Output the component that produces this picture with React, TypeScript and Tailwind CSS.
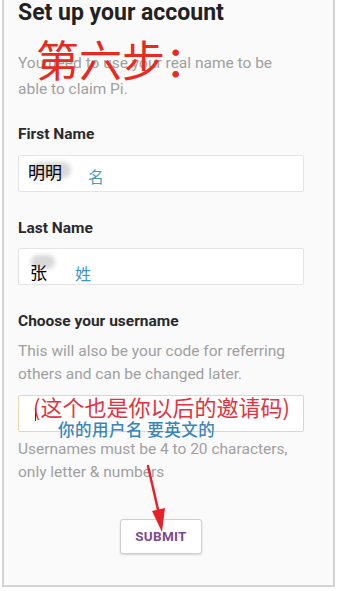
const cjk = "font-['Noto_Sans_CJK_SC',sans-serif]";

function Label({ children }: { children: string }) {
  return <label className="block text-[15.5px] leading-[20px] font-bold text-[#2a2a2a]">{children}</label>;
}

export default function App() {
  return (
    <div className="w-[337px] h-[591px] bg-white overflow-hidden font-['Roboto','Noto_Sans_CJK_SC',sans-serif]">
      <div className="relative ml-[2px] w-[333px] h-[587px] border-l-2 border-r-2 border-b-2 border-[#d4d4d4] bg-[#fafafa] pl-[14px] pr-[29px] flex flex-col">
        <h1 className="text-[23px] leading-[26px] font-bold text-[#222]">Set up your account</h1>
        <p className="mt-[24px] text-[15.5px] leading-[26px] text-[#a0a0a0]">
          You need to use your real name to be able to claim Pi.
        </p>
        {/* annotation */}
        <div className={`absolute left-[32px] top-[33px] text-[43px] leading-[50px] text-[#e82a20] ${cjk}`}>
          第六步：
        </div>

        <div className="mt-[22px]">
          <Label>First Name</Label>
        </div>
        <div className="mt-[11px] h-[37px] bg-white border border-[#e4e4e4] rounded-[2px] flex items-center pl-[9px]">
          <div className="relative">
            <div className="absolute left-[3px] top-[1px] w-[40px] h-[16px] rounded-full bg-[#d8d8d8] blur-[2px]" />
            <span className={`relative text-[17px] leading-[22px] text-black ${cjk}`}>明明</span>
          </div>
          <span className={`ml-[26px] mt-[4px] text-[16px] leading-[22px] text-[#4a9db5] ${cjk}`}>名</span>
        </div>

        <div className="mt-[26px]">
          <Label>Last Name</Label>
        </div>
        <div className="relative mt-[10px] h-[37px] bg-white border border-[#e4e4e4] rounded-[2px] flex items-end pb-[1px] pl-[11px]">
          <div className="absolute left-[12px] top-[6px] w-[24px] h-[14px] rounded-full bg-[#d8d8d8] blur-[2px]" />
          <span className={`relative text-[17px] leading-[22px] text-black ${cjk}`}>张</span>
          <span className={`ml-[28px] text-[16px] leading-[20px] text-[#3f92c0] ${cjk}`}>姓</span>
        </div>

        <div className="mt-[26px]">
          <Label>Choose your username</Label>
        </div>
        <p className="mt-[9px] text-[15.5px] leading-[23px] text-[#a0a0a0]">
          This will also be your code for referring others and can be changed later.
        </p>
        <div className="relative mt-[9px] h-[37px] bg-white border border-[#e6d8a8] rounded-[2px] flex items-start pl-[16px] pt-[12px]">
          <div className="w-[1px] h-[13px] bg-[#333]" />
          <span className={`relative z-10 ml-[22px] mt-[11px] text-[16.5px] leading-[20px] text-[#3a86b8] font-medium ${cjk} tracking-[0.5px] whitespace-nowrap`}>
            你的用户名 要英文的
          </span>
          <span className={`absolute left-[14px] top-[-5px] text-[22px] leading-[30px] text-[#e5323e] ${cjk} whitespace-nowrap`}>
            (这个也是你以后的邀请码)
          </span>
        </div>
        <p className="mt-[6px] text-[15.5px] leading-[23px] text-[#a0a0a0]">
          Usernames must be 4 to 20 characters, only letter &amp; numbers
        </p>

        <div className="flex justify-center mt-[35px]">
          <button className="w-[82px] h-[35px] bg-white border border-[#cfcfcf] rounded-[3px] shadow-[0_1px_2px_rgba(0,0,0,0.15)] text-[13.5px] font-bold text-[#7d4a94] tracking-[0.3px]">
            SUBMIT
          </button>
        </div>

        <svg className="absolute left-[136px] top-[464px]" width="30" height="72" viewBox="0 0 30 72">
          <path d="M8 2 L19 50" stroke="#e8202a" strokeWidth="2.5" strokeLinecap="round" fill="none" />
          <path d="M12 47 L22 68 L25 44 Z" fill="#e8202a" />
        </svg>
      </div>
    </div>
  );
}
